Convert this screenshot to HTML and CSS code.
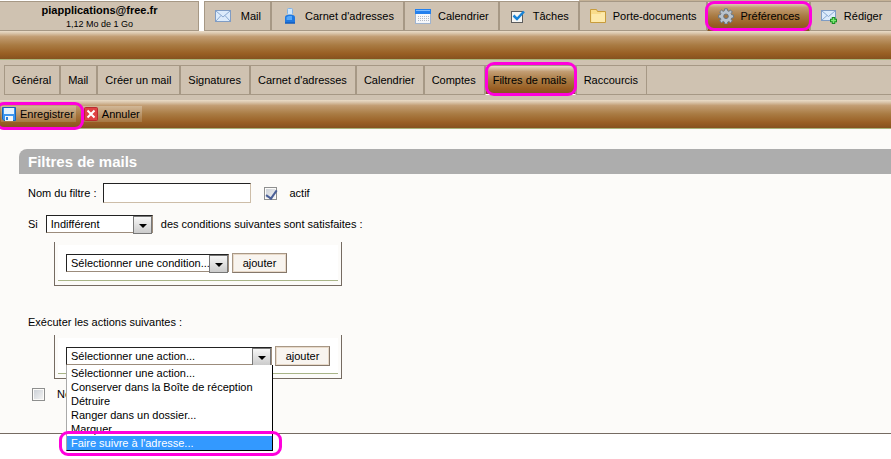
FILE: index.html
```html
<!DOCTYPE html>
<html lang="fr">
<head>
<meta charset="utf-8">
<title>Filtres de mails</title>
<link rel="stylesheet" href="styles.css">
</head>
<body>
<header class="top">
  <div class="account"><strong>piapplications@free.fr</strong><span>1,12 Mo de 1 Go</span></div>
  <nav class="apps">
    <a href="#" class="app">
      <svg width="16" height="16" viewBox="0 0 16 16"><rect x=".5" y="2.500" width="15" height="11" fill="#dcebfb" stroke="#7f9cc4"/><path d="M1 3l7 6 7-6M1 13l5-5.500M15 13l-5-5.500" fill="none" stroke="#8aa9d2"/></svg>
      <span class="short">Mail</span></a>
    <a href="#" class="app">
      <svg width="16" height="16" viewBox="0 0 16 16"><rect x="5.500" y=".5" width="5" height="6" rx="1" fill="#cfe6fb" stroke="#7fb2e6"/><path d="M3 15.500V9.500Q3 7 5.500 7h5Q13 7 13 9.500v6z" fill="#1f78e0"/><path d="M4.500 12V9.500Q5 8 7 8h3v4z" fill="#55a8fa"/><path d="M3 15h10" stroke="#0c4fae"/></svg>
      <span>Carnet d'adresses</span></a>
    <a href="#" class="app">
      <svg width="16" height="16" viewBox="0 0 16 16"><rect x=".5" y="1.500" width="15" height="14" fill="#f6f8fb" stroke="#9fb4d0"/><rect y="1" width="16" height="5" fill="#2380ee"/><path d="M1 2.500h14" stroke="#7dbcff"/><path d="M3 8.500h11M3 10.500h11M3 12.500h11" stroke="#b4b9c4" stroke-dasharray="1 1"/></svg>
      <span>Calendrier</span></a>
    <a href="#" class="app">
      <svg width="16" height="16" viewBox="0 0 16 16"><rect x="1.500" y="3.500" width="11" height="11" fill="#f5f5f2" stroke="#5d5d5d"/><path d="M3.500 7.500l3.500 3.500 7-7.500" fill="none" stroke="#1683d8" stroke-width="2.500"/></svg>
      <span>Tâches</span></a>
    <a href="#" class="app edge">
      <svg width="16" height="16" viewBox="0 0 16 16"><path d="M.5 14.500v-13h6l1 2h8v11z" fill="#f9dc8b" stroke="#c89c3c"/><path d="M1.500 6h9l1-1.500h3.500V14H1.500z" fill="#fde9ab"/></svg>
      <span>Porte-documents</span></a>
    <a href="#" class="app edge active">
      <svg width="16" height="16" viewBox="0 0 16 16"><g fill="#b9c3cd" stroke="#687684"><path d="M6.700.8h2.600l.4 2 1.100.5 1.700-1.200 1.800 1.800-1.200 1.700.5 1.100 2 .4v2.600l-2 .4-.5 1.100 1.200 1.700-1.800 1.800-1.700-1.200-1.100.5-.4 2H6.700l-.4-2-1.100-.5-1.700 1.200-1.800-1.800 1.200-1.700-.5-1.100-2-.4V7.100l2-.4.5-1.100-1.200-1.700 1.800-1.800 1.700 1.200 1.100-.5z"/><circle cx="8" cy="8.300" r="2.300" fill="#a5763f"/></g></svg>
      <span>Préférences</span><i class="ring ring-app"></i></a>
    <a href="#" class="app edge last">
      <svg width="16" height="16" viewBox="0 0 16 16"><rect x=".5" y="2.500" width="14" height="10" fill="#dcebfb" stroke="#7f9cc4"/><path d="M1 3l6.500 5.500L14 3M1 12l5-4.500" fill="none" stroke="#8aa9d2"/><path d="M12.500 9v7M9 12.500h7" stroke="#188d22" stroke-width="3.500"/><path d="M12.500 10v5M10 12.500h5" stroke="#7bea72" stroke-width="1.500"/></svg>
      <span>Rédiger</span></a>
  </nav>
</header>
<div class="bar"></div>
<div class="subbar">
  <nav class="tabs">
    <a href="#">Général</a><a href="#">Mail</a><a href="#">Créer un mail</a><a href="#">Signatures</a><a href="#">Carnet d'adresses</a><a href="#">Calendrier</a><a href="#">Comptes</a><a href="#" class="active">Filtres de mails<i class="ring ring-tab"></i></a><a href="#">Raccourcis</a>
    <span class="rest"></span>
  </nav>
</div>
<div class="bar toolbar">
  <button type="button">
    <svg width="14" height="14" viewBox="0 0 14 14"><path d="M.5.5h13v13H2l-1.500-1.500z" fill="#3b94ee" stroke="#1764b8"/><rect x="2" y="1" width="10" height="6" fill="#e7f3fe"/><rect x="3" y="9" width="8" height="5" fill="#f2f5f8"/><rect x="4" y="10" width="2" height="3" fill="#2b7ed8"/></svg>
    Enregistrer<i class="ring ring-save"></i></button>
  <button type="button">
    <svg width="14" height="14" viewBox="0 0 14 14"><rect x=".5" y=".5" width="13" height="13" rx="1" fill="#df4343" stroke="#b92b30"/><path d="M3.500 3.500l7 7M10.500 3.500l-7 7" stroke="#fff" stroke-width="2"/></svg>
    Annuler</button>
</div>
<main>
  <h1>Filtres de mails</h1>
  <form>
    <div class="row name-row">
      <label for="name">Nom du filtre :</label>
      <input type="text" id="name">
      <input type="checkbox" id="on" checked>
      <label for="on">actif</label>
    </div>
    <div class="row match-row">
      <label for="match">Si</label>
      <span class="pick"><select id="match" class="w-match"><option>Indifférent</option></select></span>
      <span>des conditions suivantes sont satisfaites :</span>
    </div>
    <div class="group">
      <div class="inner">
        <span class="pick"><select class="w-cond" aria-label="Condition"><option>Sélectionner une condition...</option></select></span>
        <button type="button" class="add">ajouter</button>
      </div>
    </div>
    <p class="caption">Exécuter les actions suivantes :</p>
    <div class="group">
      <div class="inner">
        <span class="pick"><select class="w-act" aria-label="Action"><option>Sélectionner une action...</option></select>
          <ul class="menu" role="listbox" aria-label="Action">
            <li role="option">Sélectionner une action...</li>
            <li role="option">Conserver dans la Boîte de réception</li>
            <li role="option">Détruire</li>
            <li role="option">Ranger dans un dossier...</li>
            <li role="option">Marquer</li>
            <li role="option" class="chosen" aria-selected="true">Faire suivre à l'adresse...<i class="ring ring-item"></i></li>
          </ul></span>
        <button type="button" class="add">ajouter</button>
      </div>
    </div>
    <div class="row stop-row">
      <input type="checkbox" id="stop">
      <label for="stop">Ne</label>
    </div>
  </form>
</main>
</body>
</html>
```
FILE: styles.css
```css
* { box-sizing: border-box; }

body {
  min-height: 100vh;
  margin: 0;
  background: #fff;
  color: #000;
  font: 11px/14px "Liberation Sans", Arial, sans-serif;
}

a { color: inherit; text-decoration: none; }
button, input, select { font: inherit; color: inherit; margin: 0; }
svg { display: block; flex: none; }

.top { display: flex; gap: 5px; padding-top: 1px; }

.account {
  flex: none;
  width: 199px;
  padding: 1px 0 0 1px;
  border: 1px solid #a69885;
  border-left: 0;
  background: #cfc2b1;
  text-align: center;
}
.account strong { display: block; font-size: 11px; line-height: 15px; }
.account span { display: block; font-size: 9px; line-height: 12px; }

.apps { display: flex; flex: 1; min-width: 0; }
.app {
  position: relative;
  display: flex;
  align-items: center;
  gap: 7px;
  height: 30px;
  padding: 0 9px 0 10px;
  border: 1px solid #a69885;
  background: #cfc2b1;
  white-space: nowrap;
}
.app.edge { box-shadow: 0 -1px #c5b297; }
.app.last { flex: 1; border-right: 0; }
.app.active { border-color: #a69885 #a69885 #87531e; }
.short { min-width: 23px; text-align: right; }

.bar, .app.active, .tabs .active {
  background: linear-gradient(#eadcc8, #dac6ac 8%, #c29d73 20%, #a97b43 50%, #995f24 80%, #86521f);
}
.bar { height: 29px; border-bottom: 1px solid #a9b37a; }

.subbar { padding: 5px 0; background: #cfc2b1; }
.tabs { display: flex; padding-left: 4px; }
.tabs a, .rest {
  position: relative;
  height: 30px;
  padding: 0 8px 0 7px;
  border: 1px solid #a69885;
  line-height: 28px;
  white-space: nowrap;
}
.tabs .active { border-bottom-color: #fff; background-clip: padding-box; }
.rest { flex: 1; padding: 0; border-width: 1px 0; }

.toolbar { display: flex; align-items: flex-start; gap: 7px; padding: 6px 1px; }
.toolbar button {
  position: relative;
  display: flex;
  align-items: center;
  gap: 4px;
  height: 16px;
  padding: 0 2px 0 1px;
  border: 0;
  background: linear-gradient(#d1b797, #a67843);
}

main { padding: 20px 0 32px 19px; border-bottom: 1px solid #756b62; background: #fcfbf9; }
h1 {
  margin: 0 0 9px;
  padding-left: 9px;
  border-top-left-radius: 8px;
  background: #adadad;
  color: #fff;
  font-size: 15px;
  line-height: 25px;
}
form { padding-left: 9px; }
.row { display: flex; align-items: center; }

.name-row input[type="text"] {
  width: 148px;
  height: 20px;
  margin: 0 13px 0 7px;
  border: 1px solid;
  border-color: #222 #cdbda8 #cdbda8 #222;
  background: #fff;
}
input[type="checkbox"] {
  appearance: none;
  width: 13px;
  height: 13px;
  margin-right: 12px;
  padding: 1px;
  border: 1px solid #8e8f8f;
  background: linear-gradient(135deg, #c9ced5, #f6f6f6);
  background-clip: content-box;
}
input[type="checkbox"]:checked { position: relative; }
input[type="checkbox"]:checked::after {
  content: "";
  position: absolute;
  left: 3px;
  top: 0;
  width: 5px;
  height: 9px;
  border: solid #4a5f97;
  border-width: 0 2px 2px 0;
  transform: rotate(35deg);
}

.match-row { gap: 8px; margin: 12px 0 9px; }

.pick { position: relative; display: block; }
.pick::before {
  content: "";
  position: absolute;
  top: 1px;
  right: 1px;
  width: 17px;
  height: 16px;
  border: 1px solid #777;
  background: linear-gradient(#f6f6f6, #cbcbcb);
  pointer-events: none;
}
.pick::after {
  content: "";
  position: absolute;
  top: 9px;
  right: 6px;
  border: 4px solid transparent;
  border-top-color: #000;
  border-bottom: 0;
  pointer-events: none;
}
select {
  appearance: none;
  display: block;
  height: 18px;
  padding: 0 18px 0 4px;
  border: 1px solid;
  border-color: #222 #9c8c7c #9c8c7c #222;
  border-radius: 0;
  background: #fff;
}
.w-match { width: 107px; }
.w-cond { width: 163px; }
.w-act { width: 206px; }

.group {
  width: 288px;
  margin-left: 26px;
  padding: 3px 3px 4px;
  border: 1px solid #756b62;
  border-top: 0;
}
.inner {
  display: flex;
  align-items: center;
  gap: 3px;
  padding: 8px 8px 7px;
  border-bottom: 1px solid #a9b588;
  background: #fff;
}
.add {
  width: 55px;
  height: 20px;
  padding: 0;
  border: 1px solid;
  border-color: #a89886 #85776a #85776a #a89886;
  box-shadow: inset 0 0 0 1px #e8d9c8;
  background: #f8f4ef;
}
.caption { margin: 29px 0 6px; }
.stop-row { margin: 8px 0 0 4px; }

.menu {
  position: absolute;
  top: 18px;
  left: 0;
  z-index: 1;
  width: 207px;
  margin: 0;
  padding: 1px 0 0;
  border: 1px solid #000;
  border-left-color: #aaa;
  border-top: 0;
  background: #fff;
  list-style: none;
}
.menu li { position: relative; padding-left: 4px; white-space: nowrap; }
.menu .chosen { background: #39f; color: #fff; }

/* marker outlines drawn over highlighted controls */
.ring {
  position: absolute;
  z-index: 2;
  border: 3px solid #ff00dc;
  border-radius: 9px;
  pointer-events: none;
}
.ring-app { inset: -1px -3px -1px -3px; }
.ring-tab { inset: -4px -2px -2px -1px; }
.ring-save { inset: -4px -8px -8px -6px; }
.ring-item { inset: -5px -10px -6px -8px; }
```
